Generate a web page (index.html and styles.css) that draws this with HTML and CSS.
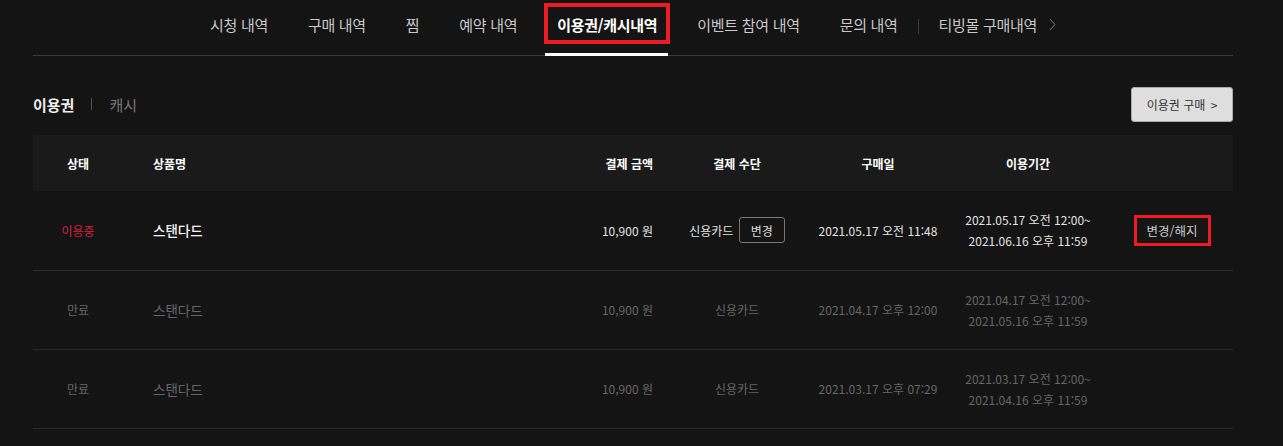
FILE: index.html
```html
<!DOCTYPE html>
<html lang="ko">
<head>
    <meta charset="UTF-8">
    <meta name="viewport" content="width=device-width, initial-scale=1.0">
    <title>이용권/캐시내역</title>
    <link rel="stylesheet" href="styles.css">
</head>
<body>
    <div class="container">
        <nav class="gnb">
            <ul class="gnb-list">
                <li><a href="#">시청 내역</a></li>
                <li><a href="#">구매 내역</a></li>
                <li><a href="#">찜</a></li>
                <li><a href="#">예약 내역</a></li>
                <li class="active"><a href="#">이용권/캐시내역</a><span class="mark"></span></li>
                <li><a href="#">이벤트 참여 내역</a></li>
                <li><a href="#">문의 내역</a></li>
                <li class="bar"></li>
                <li class="mall">
                    <a href="#">티빙몰 구매내역
                        <svg class="chevron" width="7" height="13" viewBox="0 0 7 13"><path d="M1 1l5 5.5L1 12" fill="none" stroke="#777" stroke-width="1"/></svg>
                    </a>
                </li>
            </ul>
        </nav>

        <div class="sub-head">
            <div class="sub-tabs">
                <span class="sub-tab on">이용권</span>
                <span class="sub-sep"></span>
                <span class="sub-tab">캐시</span>
            </div>
            <button class="buy-btn">이용권 구매 <span class="gt">&gt;</span></button>
        </div>

        <table class="ticket-table">
            <colgroup>
                <col class="c-status">
                <col class="c-name">
                <col class="c-price">
                <col class="c-pay">
                <col class="c-date">
                <col class="c-period">
                <col class="c-action">
            </colgroup>
            <thead>
                <tr>
                    <th>상태</th>
                    <th class="left">상품명</th>
                    <th class="right">결제 금액</th>
                    <th>결제 수단</th>
                    <th>구매일</th>
                    <th>이용기간</th>
                    <th></th>
                </tr>
            </thead>
            <tbody>
                <tr class="using">
                    <td class="status">이용중</td>
                    <td class="left name">스탠다드</td>
                    <td class="right">10,900 원</td>
                    <td>신용카드 <button class="small-btn">변경</button></td>
                    <td>2021.05.17 오전 11:48</td>
                    <td class="period">2021.05.17 오전 12:00~<br>2021.06.16 오후 11:59</td>
                    <td><button class="cancel-btn">변경/해지</button></td>
                </tr>
                <tr class="expired">
                    <td class="status">만료</td>
                    <td class="left name">스탠다드</td>
                    <td class="right">10,900 원</td>
                    <td>신용카드</td>
                    <td>2021.04.17 오후 12:00</td>
                    <td class="period">2021.04.17 오전 12:00~<br>2021.05.16 오후 11:59</td>
                    <td></td>
                </tr>
                <tr class="expired">
                    <td class="status">만료</td>
                    <td class="left name">스탠다드</td>
                    <td class="right">10,900 원</td>
                    <td>신용카드</td>
                    <td>2021.03.17 오후 07:29</td>
                    <td class="period">2021.03.17 오전 12:00~<br>2021.04.16 오후 11:59</td>
                    <td></td>
                </tr>
            </tbody>
        </table>
    </div>
</body>
</html>
```

FILE: styles.css
```css
* {
    margin: 0;
    padding: 0;
    box-sizing: border-box;
    font-family: "Noto Sans CJK KR", "Noto Sans", sans-serif;
}

body {
    background-color: #141414;
    color: #ddd;
}

.container {
    width: 1200px;
    margin-left: 33px;
}

/* top menu */
.gnb {
    height: 56px;
    border-bottom: 1px solid #3a3a3a;
}

.gnb-list {
    list-style: none;
    display: flex;
    justify-content: center;
    height: 100%;
}

.gnb-list li {
    position: relative;
    display: flex;
    align-items: center;
}

.gnb-list a {
    display: flex;
    align-items: center;
    height: 100%;
    padding: 0 20px 6px;
    color: #c8c8c8;
    font-size: 15px;
    text-decoration: none;
    letter-spacing: -0.3px;
}

.gnb-list .active a {
    color: #fff;
    font-weight: bold;
    font-size: 15px;
}

.gnb-list .active::after {
    content: "";
    position: absolute;
    left: 8px;
    right: 9px;
    bottom: -1px;
    height: 3px;
    background-color: #fff;
}

.gnb-list .mark {
    position: absolute;
    top: 3px;
    left: 7px;
    right: 7px;
    height: 41px;
    border: 4px solid #ed1c24;
}

.gnb-list .bar {
    width: 1px;
    height: 15px;
    margin-top: 19px;
    background-color: #3c3c3c;
    align-self: flex-start;
}

.chevron {
    margin-left: 12px;
}

/* sub head */
.sub-head {
    display: flex;
    justify-content: space-between;
    align-items: center;
    height: 34px;
    margin-top: 31px;
}

.sub-tabs {
    display: flex;
    align-items: center;
}

.sub-tab {
    font-size: 15px;
    color: #777;
}

.sub-tab.on {
    color: #eee;
    font-weight: bold;
}

.sub-sep {
    width: 1px;
    height: 12px;
    margin: 0 17px;
    background-color: #555;
}

.buy-btn {
    width: 102px;
    height: 35px;
    background-color: #dedede;
    border: 1px solid #aaa;
    border-radius: 3px;
    color: #333;
    font-size: 12px;
    cursor: pointer;
}

.buy-btn .gt {
    margin-left: 2px;
}

/* table */
.ticket-table {
    width: 1200px;
    margin-top: 14px;
    border-collapse: collapse;
    table-layout: fixed;
    font-size: 12px;
}

.c-status { width: 90px; }
.c-name { width: 420px; }
.c-price { width: 120px; }
.c-pay { width: 148px; }
.c-date { width: 134px; }
.c-period { width: 166px; }
.c-action { width: 122px; }

.ticket-table th {
    height: 56px;
    background-color: #1a1a1a;
    color: #fff;
    font-weight: bold;
    text-align: center;
}

.ticket-table td {
    height: 79px;
    border-bottom: 1px solid #2a2a2a;
    text-align: center;
    white-space: nowrap;
}

.ticket-table .left {
    text-align: left;
    padding-left: 30px;
}

.ticket-table .right {
    text-align: right;
    padding-right: 10px;
}

.ticket-table .period {
    line-height: 21px;
}

.using td {
    color: #e2e2e2;
}

.using .status {
    color: #d8203f;
}

.using .name {
    color: #f2f2f2;
    font-weight: 500;
    font-size: 13.5px;
}

.expired td {
    color: #666;
}

.expired .name {
    font-size: 13.5px;
}

.small-btn {
    height: 26px;
    padding: 0 11px;
    margin-left: 2px;
    background: transparent;
    border: 1px solid #777;
    border-radius: 3px;
    color: #ddd;
    font-size: 12px;
}

.cancel-btn {
    width: 77px;
    height: 31px;
    background-color: #161616;
    border: 1px solid #555;
    color: #ccc;
    font-size: 12.5px;
    outline: 3px solid #ed1c24;
    outline-offset: -3px;
}
```
